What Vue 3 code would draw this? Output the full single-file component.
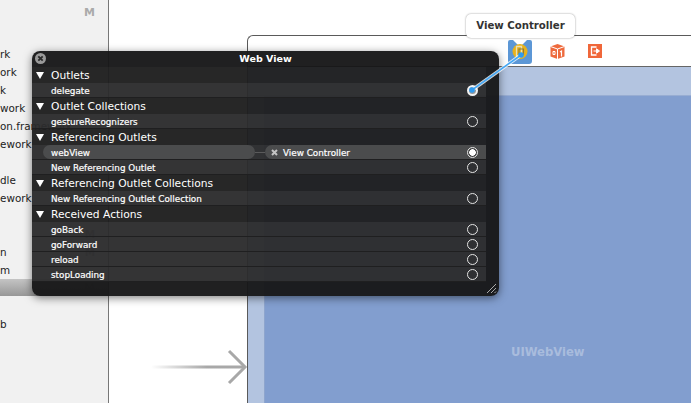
<script setup>
const files = [
  { name: 'rk' },
  { name: 'ork' },
  { name: 'k' },
  { name: 'work' },
  { name: 'on.framework' },
  { name: 'ework' },
  { name: '' },
  { name: 'dle' },
  { name: 'ework' },
  { name: '' },
  { name: '', m: true },
  { name: 'n', m: true },
  { name: 'm' }
]

const sections = [
  { title: 'Outlets', rows: ['delegate'] },
  { title: 'Outlet Collections', rows: ['gestureRecognizers'] },
  { title: 'Referencing Outlets', rows: ['webView', 'New Referencing Outlet'] },
  { title: 'Referencing Outlet Collections', rows: ['New Referencing Outlet Collection'] },
  { title: 'Received Actions', rows: ['goBack', 'goForward', 'reload', 'stopLoading'] }
]
</script>

<template>
  <div class="page">
    <aside class="sidebar">
      <div class="top-m">M</div>
      <div class="file" v-for="(f, i) in files" :key="i">
        <span>{{ f.name }}</span>
        <span v-if="f.m" class="m">M</span>
      </div>
      <div class="group-bar"><span class="m">M</span></div>
      <div class="file after-bar">b</div>
    </aside>

    <main class="canvas">
      <div class="frame">
        <div class="toolbar">
          <svg class="vc-icon" width="24" height="24" viewBox="0 0 24 24">
            <path d="M2 0 L5 0 L12 7 L19 0 L22 0 Q24 0 24 2 L24 21 Q24 24 21 24 L3 24 Q0 24 0 21 L0 2 Q0 0 2 0 Z" fill="#5c97d6" />
            <circle cx="12" cy="11.5" r="7.5" fill="#e8b21c" />
            <path d="M8.5 6.5 H13.5 V16.5 H8.5 Z" fill="none" stroke="#e9dfb4" stroke-width="1.3" />
            <path d="M11 9 H15.5 V14.5 H11 Z" fill="none" stroke="#8c7a3a" stroke-width="1.1" />
          </svg>
          <svg class="cube-icon" width="15" height="15" viewBox="0 0 15 15">
            <path d="M7.5 0 L14.5 2.5 V12.5 L7.5 15 L0.5 12.5 V2.5 Z" fill="#ee6a3d" />
            <path d="M0.5 2.5 L7.5 5 L14.5 2.5 M7.5 5 V15" fill="none" stroke="#fff" stroke-width="1" />
            <path d="M10 8 L11.5 7 V12.5" fill="none" stroke="#fff" stroke-width="1.2" />
            <path d="M3 7.5 H5 V10.5 H3 Z" fill="none" stroke="#fff" stroke-width="1" />
          </svg>
          <svg class="exit-icon" width="14" height="14" viewBox="0 0 14 14">
            <rect width="14" height="14" fill="#f0673a" />
            <path d="M8.5 3 H3.5 V11 H8.5" fill="none" stroke="#fff" stroke-width="1.3" />
            <path d="M5.5 7 H10 M8.5 4.8 L11.5 7 L8.5 9.2 Z" fill="#fff" stroke="#fff" stroke-width="1" />
          </svg>
        </div>
        <div class="view-body">
          <div class="nav-strip"></div>
          <div class="view-row">
            <div class="left-strip"></div>
            <div class="web-view"><span>UIWebView</span></div>
          </div>
        </div>
      </div>

      <svg class="entry-arrow" width="100" height="36" viewBox="0 0 100 36">
        <defs>
          <linearGradient id="fade" x1="0" x2="1" y1="0" y2="0">
            <stop offset="0" stop-color="#a8a8a8" stop-opacity="0" />
            <stop offset="0.6" stop-color="#a8a8a8" />
          </linearGradient>
        </defs>
        <rect x="0" y="16.5" width="93" height="3" fill="url(#fade)" />
        <path d="M78 2 L94 18 L78 34" fill="none" stroke="#a8a8a8" stroke-width="3" />
      </svg>
    </main>

    <div class="tooltip">View Controller</div>

    <section class="panel">
      <header class="panel-title">
        <span class="close">
          <svg width="11" height="11" viewBox="0 0 11 11">
            <circle cx="5.5" cy="5.5" r="5.5" fill="#9a9a9a" />
            <path d="M3.3 3.3 L7.7 7.7 M7.7 3.3 L3.3 7.7" stroke="#2a2a2a" stroke-width="1.8" />
          </svg>
        </span>
        Web View
      </header>
      <div class="sections">
        <template v-for="s in sections" :key="s.title">
          <div class="section-head"><i class="tri"></i>{{ s.title }}</div>
          <template v-for="r in s.rows" :key="r">
            <div v-if="r === 'webView'" class="row linked">
              <div class="pill source">{{ r }}</div>
              <div class="wire"></div>
              <div class="pill target">
                <svg width="7" height="7" viewBox="0 0 7 7">
                  <path d="M1 1 L6 6 M6 1 L1 6" stroke="#c4c4c4" stroke-width="2" />
                </svg>
                <span>View Controller</span>
              </div>
              <i class="ring on"></i>
            </div>
            <div v-else class="row">
              <span>{{ r }}</span>
              <i class="ring" :class="{ active: r === 'delegate' }"></i>
            </div>
          </template>
        </template>
      </div>
      <footer class="panel-foot">
        <svg width="11" height="11" viewBox="0 0 11 11">
          <path d="M1 10 L10 1 M5 10 L10 5 M8.5 10 L10 8.5" stroke="#aaa" stroke-width="1" />
        </svg>
      </footer>
    </section>

    <svg class="link-line" width="60" height="46" viewBox="0 0 60 46">
      <path d="M5 41 L54 6" stroke="#fff" stroke-width="3.4" stroke-opacity="0.8" />
      <path d="M5 41 L54 6" stroke="#45a8f5" stroke-width="1.6" />
      <circle cx="54" cy="6" r="2.8" fill="#2f9bf0" />
      <circle cx="5" cy="41" r="2.8" fill="#2f9bf0" />
    </svg>
  </div>
</template>

<style>
html, body {
  margin: 0;
  background: #fff;
}
</style>

<style scoped>
.page {
  position: relative;
  display: flex;
  width: 691px;
  height: 403px;
  overflow: hidden;
  font-family: "DejaVu Sans", sans-serif;
  background: #fff;
}
.sidebar {
  width: 108px;
  flex-shrink: 0;
  background: #f1f1f1;
  border-right: 1px solid #777;
  color: #222;
  font-size: 10.4px;
}
.top-m {
  height: 45px;
  padding: 6px 13px 0 0;
  box-sizing: border-box;
  text-align: right;
  font-weight: bold;
  font-size: 11px;
  color: #aaa;
}
.file {
  display: flex;
  justify-content: space-between;
  height: 18px;
  line-height: 18px;
  white-space: nowrap;
}
.m {
  margin-left: auto;
  padding-right: 13px;
  font-weight: bold;
  color: #aaa;
}
.group-bar {
  display: flex;
  align-items: center;
  height: 17px;
  font-size: 11px;
  background: linear-gradient(#c4c4c4, #979797);
}
.after-bar {
  margin-top: 19px;
}
.canvas {
  position: relative;
  flex: 1;
  padding: 35px 0 0 138px;
  display: flex;
  min-width: 0;
}
.frame {
  flex: 1;
  display: flex;
  flex-direction: column;
  border-top: 1px solid #5a5a5a;
  border-left: 1px solid #5a5a5a;
  border-top-left-radius: 6px;
}
.toolbar {
  height: 30px;
  flex-shrink: 0;
  display: flex;
  align-items: center;
  padding-left: 260px;
  border-bottom: 1px solid #666;
  box-sizing: content-box;
}
.vc-icon {
  margin-top: 1px;
}
.cube-icon {
  margin-left: 18px;
}
.exit-icon {
  margin-left: 23px;
}
.view-body {
  flex: 1;
  display: flex;
  flex-direction: column;
}
.nav-strip {
  height: 28px;
  flex-shrink: 0;
  background: #b3c4e0;
  border-bottom: 1px solid #98add2;
}
.view-row {
  flex: 1;
  display: flex;
}
.left-strip {
  width: 16px;
  background: #b3c4e0;
  border-right: 1px solid #8ea5cd;
}
.web-view {
  flex: 1;
  background: #829ecf;
  padding: 249px 0 0 246px;
  box-sizing: border-box;
  color: #a9bcdd;
  font-size: 11.6px;
  font-weight: bold;
}
.entry-arrow {
  position: absolute;
  left: 42px;
  top: 349px;
}
.tooltip {
  position: absolute;
  left: 466px;
  top: 14px;
  width: 109px;
  height: 24px;
  box-sizing: border-box;
  line-height: 24px;
  text-align: center;
  background: #fff;
  border-radius: 5px;
  box-shadow: 0 0 2px rgba(0, 0, 0, 0.45);
  color: #333;
  font-size: 10.2px;
  font-weight: bold;
}
.panel {
  position: absolute;
  left: 32px;
  top: 51px;
  width: 467px;
  height: 245px;
  display: flex;
  flex-direction: column;
  border-radius: 8px;
  background: rgba(22, 22, 23, 0.955);
  box-shadow: 0 2px 9px rgba(0, 0, 0, 0.5);
  color: #fff;
}
.panel-title {
  position: relative;
  height: 16px;
  line-height: 16px;
  text-align: center;
  font-size: 9.5px;
  font-weight: bold;
  color: #fff;
}
.close {
  position: absolute;
  left: 3px;
  top: 2px;
  line-height: 0;
}
.sections {
  width: 454px;
}
.section-head {
  display: flex;
  align-items: center;
  height: 16px;
  padding-left: 4px;
  background: rgba(255, 255, 255, 0.03);
  font-size: 10.7px;
}
.tri {
  width: 0;
  height: 0;
  margin-right: 7px;
  border-left: 4px solid transparent;
  border-right: 4px solid transparent;
  border-top: 7px solid #fff;
}
.row {
  display: flex;
  align-items: center;
  justify-content: space-between;
  height: 15px;
  box-sizing: border-box;
  padding: 1px 8.5px 0 19px;
  background: rgba(255, 255, 255, 0.09);
  border-bottom: 1px solid #1f1f20;
  font-size: 8.8px;
  -webkit-text-stroke: 0.2px #fff;
}
.linked {
  position: relative;
  justify-content: flex-start;
  padding: 0;
}
.pill {
  display: flex;
  align-items: center;
  height: 14px;
  box-sizing: border-box;
  padding-top: 1px;
  background: #4b4c4d;
}
.source {
  width: 212px;
  margin-left: 11px;
  padding-left: 8px;
  border-radius: 7px;
}
.wire {
  width: 10px;
  height: 1px;
  background: #5a5a5b;
}
.target {
  flex: 1;
  gap: 5px;
  padding-left: 6px;
  border-radius: 7px 0 0 7px;
}
.ring {
  width: 11px;
  height: 11px;
  box-sizing: border-box;
  border: 1.5px solid #e4e4e4;
  border-radius: 50%;
  flex-shrink: 0;
}
.ring.on {
  position: absolute;
  right: 8.5px;
  top: 1.5px;
  background: radial-gradient(circle, #fff 0 3px, #444 3.6px);
}
.ring.active {
  border-width: 2px;
  border-color: #f2f2f2;
  background: rgba(255, 255, 255, 0.5);
}
.panel-foot {
  flex: 1;
  display: flex;
  justify-content: flex-end;
  align-items: flex-end;
  padding: 0 2px 2px 0;
  line-height: 0;
}
.link-line {
  position: absolute;
  left: 467px;
  top: 49px;
}
</style>
